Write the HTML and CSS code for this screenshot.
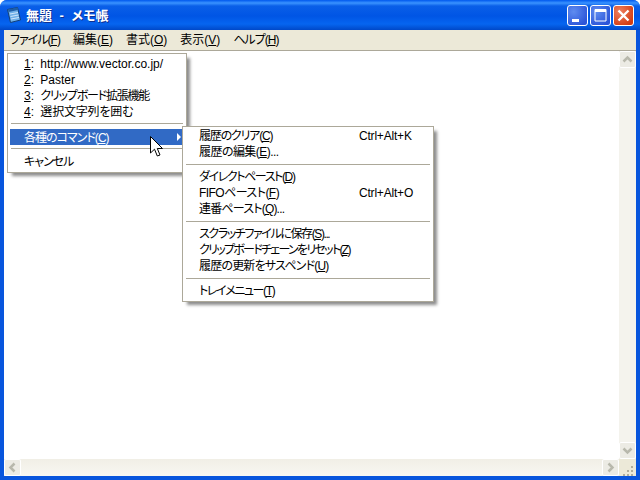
FILE: index.html
```html
<!DOCTYPE html>
<html lang="ja">
<head>
<meta charset="utf-8">
<title>無題 - メモ帳</title>
<link rel="stylesheet" href="styles.css">
</head>
<body>
<div class="window">
  <header class="titlebar">
    <svg class="app-icon" width="16" height="18" viewBox="0 0 16 18">
      <path d="M1.500 3.500 L11.500 1.500 L14.500 14 L4.500 16.500 Z" fill="#6fb0e8" stroke="#123f78"/>
      <path d="M2 3.500 L11.500 1.500 L12 4 L2.600 6 Z" fill="#1f5fa8"/>
      <path d="M4 8 L12 6.500 M4.500 10.500 L12.500 9 M5 13 L13 11.500" stroke="#cfe6fb"/>
    </svg>
    <span class="title-text">無題 - メモ帳</span>
    <div class="caption-buttons">
      <div class="cap-btn"><svg width="21" height="21" viewBox="0 0 21 21"><rect x="5" y="14" width="7" height="3" fill="#fff"/></svg></div>
      <div class="cap-btn"><svg width="21" height="21" viewBox="0 0 21 21"><path d="M5 4.500 H16 V16 H5 Z" fill="none" stroke="#fff"/><rect x="5" y="4" width="11" height="3" fill="#fff"/></svg></div>
      <div class="cap-btn close"><svg width="21" height="21" viewBox="0 0 21 21"><path d="M5.500 5.500 L15.500 15.500 M15.500 5.500 L5.500 15.500" stroke="#fff" stroke-width="2.400"/></svg></div>
    </div>
  </header>
  <div class="body-frame">
    <nav class="menubar">
      <span class="t10">ファイル(<u>F</u>)</span>
      <span>編集(<u>E</u>)</span>
      <span>書式(<u>O</u>)</span>
      <span>表示(<u>V</u>)</span>
      <span class="t10">ヘルプ(<u>H</u>)</span>
    </nav>
    <div class="client">
      <div class="edit-row">
        <div class="editor"></div>
        <div class="vscroll">
          <div class="sb-btn"><svg width="17" height="17" viewBox="0 0 17 17"><path d="M4.500 10.500 L8.500 6.500 L12.500 10.500" fill="none" stroke="#b8b8ac" stroke-width="2.500"/></svg></div>
          <div class="sb-track"></div>
          <div class="sb-btn"><svg width="17" height="17" viewBox="0 0 17 17"><path d="M4.500 6.500 L8.500 10.500 L12.500 6.500" fill="none" stroke="#b8b8ac" stroke-width="2.500"/></svg></div>
        </div>
      </div>
      <div class="hscroll">
        <div class="sb-btn"><svg width="17" height="17" viewBox="0 0 17 17"><path d="M10.500 4.500 L6.500 8.500 L10.500 12.500" fill="none" stroke="#b8b8ac" stroke-width="2.500"/></svg></div>
        <div class="sb-track-h"></div>
        <div class="sb-btn"><svg width="17" height="17" viewBox="0 0 17 17"><path d="M6.500 4.500 L10.500 8.500 L6.500 12.500" fill="none" stroke="#b8b8ac" stroke-width="2.500"/></svg></div>
        <div class="grip"><svg width="17" height="17" viewBox="0 0 17 17"><path d="M12 7h2v2h-2zM8 11h2v2H8zM12 11h2v2h-2zM4 15h2v2H4zM8 15h2v2H8zM12 15h2v2h-2z" fill="#b0ad9c"/></svg></div>
      </div>
    </div>
  </div>
</div>

<div class="menu main-menu">
  <div class="item numbered"><span><u>1</u>: http://www.vector.co.jp/</span></div>
  <div class="item numbered"><span><u>2</u>: Paster</span></div>
  <div class="item numbered"><span><u>3</u>: <span class="t12">クリップボード拡張機能</span></span></div>
  <div class="item numbered"><span><u>4</u>: <span class="t02">選択文字列を囲む</span></span></div>
  <div class="sep sep-first"></div>
  <div class="item active"><span class="t10">各種のコマンド(<u>C</u>)</span><i class="arrow"></i></div>
  <div class="sep sep-second"></div>
  <div class="item"><span class="t10">キャンセル</span></div>
</div>

<div class="menu sub-menu">
  <div class="item"><span class="t12">履歴のクリア(<u>C</u>)</span><span class="key t02">Ctrl+Alt+K</span></div>
  <div class="item"><span class="t05">履歴の編集(<u>E</u>)...</span></div>
  <div class="sep"></div>
  <div class="item"><span class="t14">ダイレクトペースト(<u>D</u>)</span></div>
  <div class="item"><span class="t05">FIFOペースト(<u>F</u>)</span><span class="key t02">Ctrl+Alt+O</span></div>
  <div class="item"><span class="t08">連番ペースト(<u>Q</u>)...</span></div>
  <div class="sep"></div>
  <div class="item"><span class="t14">スクラッチファイルに保存(<u>S</u>)...</span></div>
  <div class="item"><span class="t17">クリップボードチェーンをリセット(<u>Z</u>)</span></div>
  <div class="item"><span class="t08">履歴の更新をサスペンド(<u>U</u>)</span></div>
  <div class="sep"></div>
  <div class="item"><span class="t14">トレイメニュー(<u>T</u>)</span></div>
</div>

<svg class="cursor" width="14" height="22" viewBox="0 0 14 22">
  <path d="M0.500 0.500 V17 L4.500 13.200 L7.300 20 L10 19 L7.300 12.500 L12.500 12.500 Z" fill="#fff" stroke="#000"/>
</svg>
</body>
</html>
```
FILE: styles.css
```css
* { box-sizing: border-box; }
html, body { margin: 0; padding: 0; width: 640px; height: 480px; overflow: hidden; }
body {
  font: 12px/16px "Liberation Sans", "Noto Sans CJK JP", sans-serif;
  font-feature-settings: "palt";
  color: #000;
}
u { text-underline-offset: 1px; text-decoration-thickness: 1px; }
.t02 { letter-spacing: -.2px; }
.t05 { letter-spacing: -.55px; }
.t08 { letter-spacing: -.8px; }
.t10 { letter-spacing: -1px; }
.t12 { letter-spacing: -1.2px; }
.t14 { letter-spacing: -1.4px; }
.t17 { letter-spacing: -1.7px; }

.window {
  width: 640px; height: 480px;
  display: flex; flex-direction: column;
  background: #0855dd;
  border-radius: 7px 7px 0 0;
}
.titlebar {
  height: 30px; flex: none;
  display: flex; align-items: center;
  padding: 0 6px 0 6px;
  border-radius: 7px 7px 0 0;
  background: linear-gradient(#0058ee 0, #3a93ff 3px, #0a5fe8 6px, #0055e5 16px, #0665f0 24px, #0048c8 30px);
}
.app-icon { flex: none; margin-right: 4px; }
.title-text {
  flex: 1;
  color: #fff;
  font-weight: 700; font-size: 13px;
  word-spacing: 4px;
  padding-top: 2px;
  text-shadow: 1px 1px 0 #0f2f90;
  white-space: pre;
}
.caption-buttons { display: flex; gap: 2px; }
.cap-btn {
  width: 21px; height: 21px;
  border: 1px solid #fff; border-radius: 3px;
  background: radial-gradient(circle at 30% 30%, #5f8cf0, #2c55d8 80%);
  position: relative;
}
.cap-btn svg { position: absolute; left: -1px; top: -1px; }
.cap-btn.close { background: radial-gradient(circle at 30% 30%, #ee8060, #d33c12 80%); }

.body-frame {
  flex: 1; min-height: 0;
  margin: 0 4px 4px;
  display: flex; flex-direction: column;
}
.menubar {
  height: 20px; flex: none;
  background: #ece9d8;
  display: flex; gap: 13px;
  padding: 1px 0 0 6px;
  line-height: 18px;
  white-space: nowrap;
}
.client { flex: 1; min-height: 0; display: flex; flex-direction: column; background: #fff; border-top: 1px solid #aca899; }
.edit-row { flex: 1; min-height: 0; display: flex; }
.editor { flex: 1; background: #fff; }
.vscroll { width: 17px; flex: none; display: flex; flex-direction: column; background: #f4f3ed; }
.sb-track { flex: 1; }
.sb-btn {
  width: 17px; height: 17px; flex: none;
  background: #ecebe4;
  border: 1px solid #fff;
  border-radius: 2px;
  position: relative;
}
.sb-btn svg { position: absolute; left: -1px; top: -1px; }
.hscroll { height: 17px; flex: none; display: flex; background: #f4f3ed; }
.sb-track-h { flex: 1; background: linear-gradient(#f1efe6, #f8f7f2); }
.grip { width: 17px; flex: none; background: #ece9d8; }

.menu {
  position: absolute;
  background: #fff;
  border: 1px solid #aca899;
  box-shadow: 4px 4px 3px -1px rgba(0, 0, 0, .45);
  padding: 1px 2px;
  white-space: nowrap;
}
.main-menu { left: 7px; top: 53px; width: 180px; height: 120px; }
.sub-menu { left: 182px; top: 126px; width: 252px; height: 176px; padding-top: 0; }
.item {
  height: 16px;
  line-height: 18px;
  display: flex;
  padding-left: 14px;
  position: relative;
}
.numbered { word-spacing: 3px; }
.key { position: absolute; left: 174px; top: 0; }
.sep { height: 9px; padding-top: 5px; margin: 0 1px; }
.sep::before { content: ""; display: block; height: 1px; background: #aca899; }
.sep-first { height: 10px; padding-top: 4px; }
.sep-second { height: 8px; padding-top: 3px; }
.active { background: #316ac5; color: #fff; }
.arrow {
  position: absolute; right: 3px; top: 4px;
  border-left: 4px solid #fff;
  border-top: 4px solid transparent;
  border-bottom: 4px solid transparent;
}
.cursor { position: absolute; left: 150px; top: 136px; }
```
